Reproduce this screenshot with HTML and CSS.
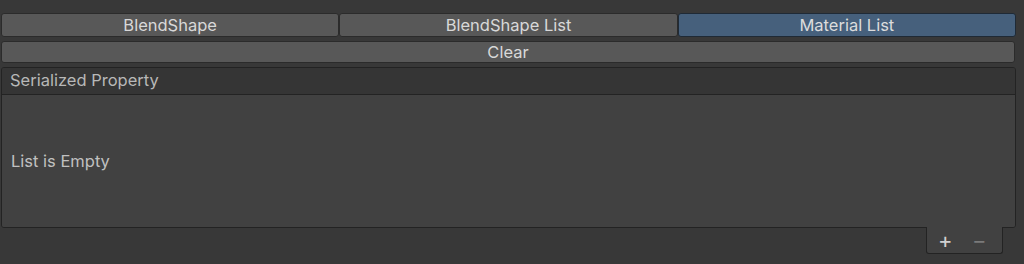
FILE: index.html
```html
<!DOCTYPE html>
<html lang="en">
<head>
  <meta charset="UTF-8">
  <title>Material List</title>
  <link rel="stylesheet" href="styles.css">
</head>
<body>
  <div class="inspector">
    <div class="tabs">
      <button class="tab">BlendShape</button>
      <button class="tab">BlendShape List</button>
      <button class="tab active">Material List</button>
    </div>
    <button class="clear">Clear</button>

    <div class="list">
      <div class="list-header">Serialized Property</div>
      <div class="list-body">List is Empty</div>
    </div>
    <div class="list-footer">
      <span class="footer-btn plus">+</span>
      <span class="footer-btn minus">&minus;</span>
    </div>
  </div>
</body>
</html>
```

FILE: styles.css
```css
body {
  margin: 0;
  background: #383838;
  font-family: Inter, "Noto Sans", sans-serif;
  color: #c4c4c4;
  height: 264px;
  overflow: hidden;
}
.inspector {
  padding: 13px 8px 0 1px;
  display: flex;
  flex-direction: column;
}
.tabs {
  display: flex;
}
.tab {
  flex: 1;
  height: 24px;
  margin: 0;
  padding: 0;
  background: #585858;
  border: 1px solid #2b2b2b;
  border-radius: 3px;
  color: #d8d8d8;
  font-family: inherit;
  font-size: 16.5px;
  line-height: 22px;
}
.tab.active {
  background: #46607c;
  border-color: #1f2a36;
  color: #dcdcdc;
}
.clear {
  margin: 4px 1px 0 0;
  height: 22px;
  padding: 0;
  background: #585858;
  border: 1px solid #2b2b2b;
  border-radius: 3px;
  color: #d8d8d8;
  font-family: inherit;
  font-size: 16.5px;
  line-height: 20px;
}
.list {
  margin-top: 4px;
  border: 1px solid #232323;
  border-radius: 3px;
  overflow: hidden;
}
.list-header {
  height: 26px;
  line-height: 25px;
  padding-left: 8px;
  background: #353535;
  border-bottom: 1px solid #232323;
  font-size: 16.5px;
  color: #b8b8b8;
}
.list-body {
  height: 132px;
  display: flex;
  align-items: center;
  padding-left: 9px;
  background: #414141;
  font-size: 16.5px;
  color: #c0c0c0;
}
.list-footer {
  align-self: flex-end;
  margin-right: 13px;
  margin-top: -1px;
  width: 77px;
  height: 27px;
  background: #414141;
  border: 1px solid #232323;
  border-top: none;
  border-radius: 0 0 3px 3px;
  display: flex;
  align-items: center;
  gap: 21px;
  padding: 0 0 0 11px;
  box-sizing: border-box;
}
.footer-btn {
  width: 13px;
  text-align: center;
  font-size: 22px;
  line-height: 1;
  color: #d0d0d0;
}
.footer-btn.minus {
  color: #7a7a7a;
}
```
